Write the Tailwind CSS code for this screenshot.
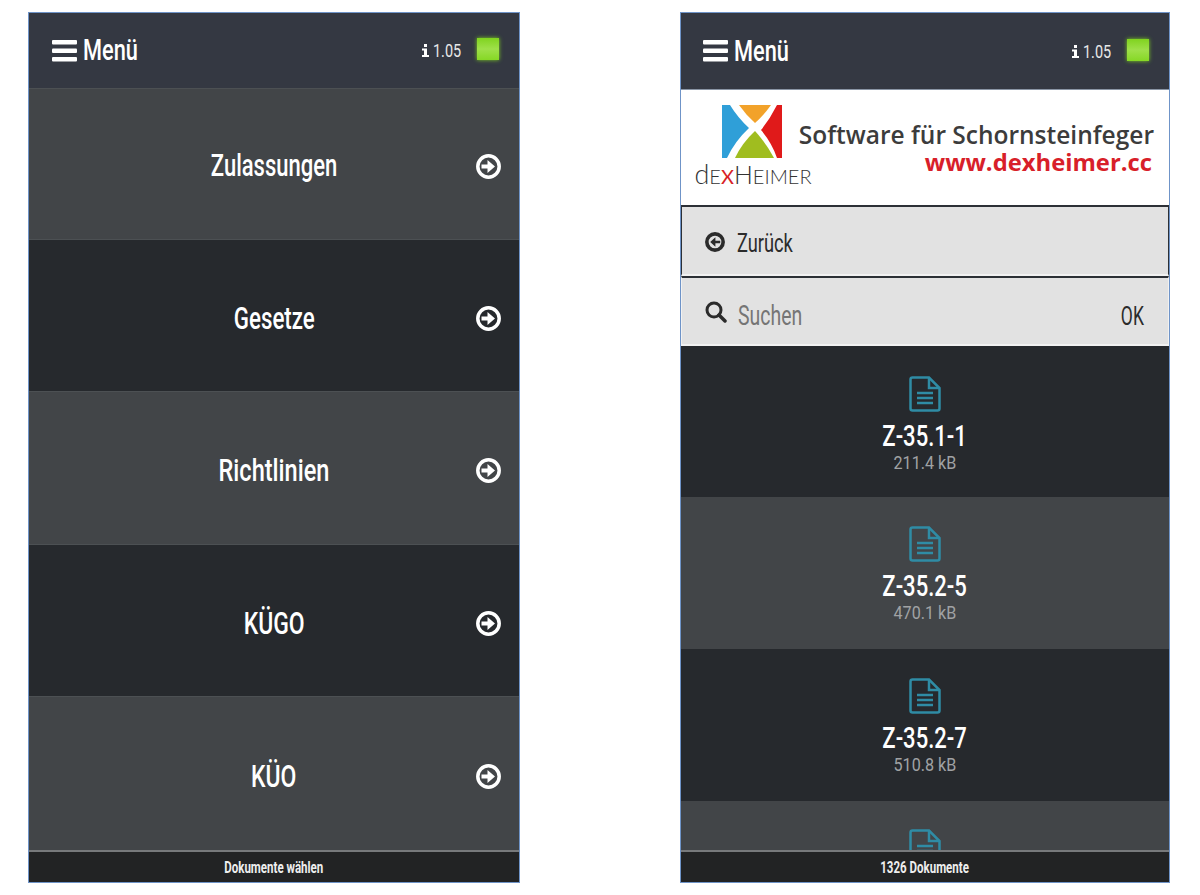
<!DOCTYPE html>
<html lang="de">
<head>
    <meta charset="UTF-8">
    <title>Dokumente</title>
    <script src="https://cdn.jsdelivr.net/npm/@tailwindcss/browser@4"></script>
</head>
<body class="bg-white h-[895px] overflow-hidden font-['Roboto',sans-serif] font-medium">
    <div class="flex pl-[28px] pt-[12px] gap-[160px]">

        <!-- Menu panel -->
        <div class="w-[492px] h-[871px] border border-[#6f94c8] flex flex-col overflow-hidden">
            <div class="h-[75px] shrink-0 bg-[#343842] flex items-center pl-[23px] pr-[20px] text-white">
                <svg class="w-[25px] h-[22px] mr-[6px]" viewBox="0 0 25 22" fill="#fff"><rect y="0" width="25" height="4.5" rx="1"/><rect y="8.5" width="25" height="4.5" rx="1"/><rect y="17" width="25" height="4.5" rx="1"/></svg>
                <span class="w-[55px] origin-left scale-x-[0.75] text-[29px] leading-none whitespace-nowrap">Menü</span>
                <svg class="w-[7px] h-[13px] ml-auto mr-[4px]" viewBox="0 0 7 13" fill="#fff"><rect x="2" y="0" width="3" height="3"/><path d="M0 4.500H5V11H7V13H0V11H2V6.500H0Z"/></svg>
                <span class="w-[28px] origin-left scale-x-[0.76] text-[19px] font-normal leading-none text-[#e8e8e8] mr-[16px] whitespace-nowrap">1.05</span>
                <div class="w-[22px] h-[22px] -mt-[3px] bg-[linear-gradient(#80d31f,#9fe04a_50%,#86d825)] shadow-[0_0_4px_#7fd020]"></div>
            </div>
            <div class="h-[151px] shrink-0 bg-[#424548] grid grid-cols-[1fr_auto_1fr] items-center text-white border-t border-[#4c5053]">
                <span></span><span class="scale-x-[0.71] text-[31px] leading-none mt-[2px]">Zulassungen</span>
                <svg class="w-[25px] h-[25px] justify-self-end mr-[18px] mt-[4px]" viewBox="0 0 25 25"><circle cx="12.500" cy="12.500" r="10.700" fill="none" stroke="#fff" stroke-width="3.500"/><path d="M5.500 10.500H11.500V6L19 12.500L11.500 19V14.500H5.500Z" fill="#fff"/></svg>
            </div>
            <div class="h-[152px] shrink-0 bg-[#26292d] grid grid-cols-[1fr_auto_1fr] items-center text-white border-t border-[#4c5053]">
                <span></span><span class="scale-x-[0.72] text-[31px] leading-none mt-[5px]">Gesetze</span>
                <svg class="w-[25px] h-[25px] justify-self-end mr-[18px] mt-[5px]" viewBox="0 0 25 25"><circle cx="12.500" cy="12.500" r="10.700" fill="none" stroke="#fff" stroke-width="3.500"/><path d="M5.500 10.500H11.500V6L19 12.500L11.500 19V14.500H5.500Z" fill="#fff"/></svg>
            </div>
            <div class="h-[153px] shrink-0 bg-[#424548] grid grid-cols-[1fr_auto_1fr] items-center text-white border-t border-[#4c5053]">
                <span></span><span class="scale-x-[0.76] text-[31px] leading-none mt-[5px]">Richtlinien</span>
                <svg class="w-[25px] h-[25px] justify-self-end mr-[18px] mt-[5px]" viewBox="0 0 25 25"><circle cx="12.500" cy="12.500" r="10.700" fill="none" stroke="#fff" stroke-width="3.500"/><path d="M5.500 10.500H11.500V6L19 12.500L11.500 19V14.500H5.500Z" fill="#fff"/></svg>
            </div>
            <div class="h-[152px] shrink-0 bg-[#26292d] grid grid-cols-[1fr_auto_1fr] items-center text-white border-t border-[#4c5053]">
                <span></span><span class="scale-x-[0.74] text-[31px] leading-none mt-[5px]">KÜGO</span>
                <svg class="w-[25px] h-[25px] justify-self-end mr-[18px] mt-[5px]" viewBox="0 0 25 25"><circle cx="12.500" cy="12.500" r="10.700" fill="none" stroke="#fff" stroke-width="3.500"/><path d="M5.500 10.500H11.500V6L19 12.500L11.500 19V14.500H5.500Z" fill="#fff"/></svg>
            </div>
            <div class="h-[154px] shrink-0 bg-[#424548] grid grid-cols-[1fr_auto_1fr] items-center text-white border-t border-[#4c5053]">
                <span></span><span class="scale-x-[0.74] text-[31px] leading-none mt-[5px]">KÜO</span>
                <svg class="w-[25px] h-[25px] justify-self-end mr-[18px] mt-[5px]" viewBox="0 0 25 25"><circle cx="12.500" cy="12.500" r="10.700" fill="none" stroke="#fff" stroke-width="3.500"/><path d="M5.500 10.500H11.500V6L19 12.500L11.500 19V14.500H5.500Z" fill="#fff"/></svg>
            </div>
            <div class="flex-1 bg-[#222324] border-t-2 border-[#77797b] flex items-center justify-center text-[#eeeeee]"><span class="scale-x-[0.72] text-[16px] font-bold whitespace-nowrap mt-[2px]">Dokumente wählen</span></div>
        </div>

        <!-- Document panel -->
        <div class="w-[490px] h-[871px] border border-[#6f94c8] flex flex-col overflow-hidden">
            <div class="h-[76px] shrink-0 bg-[#343842] flex items-center pl-[22px] pr-[20px] text-white">
                <svg class="w-[25px] h-[22px] mr-[6px]" viewBox="0 0 25 22" fill="#fff"><rect y="0" width="25" height="4.5" rx="1"/><rect y="8.5" width="25" height="4.5" rx="1"/><rect y="17" width="25" height="4.5" rx="1"/></svg>
                <span class="w-[55px] origin-left scale-x-[0.75] text-[29px] leading-none whitespace-nowrap">Menü</span>
                <svg class="w-[7px] h-[13px] ml-auto mr-[4px]" viewBox="0 0 7 13" fill="#fff"><rect x="2" y="0" width="3" height="3"/><path d="M0 4.500H5V11H7V13H0V11H2V6.500H0Z"/></svg>
                <span class="w-[28px] origin-left scale-x-[0.76] text-[19px] font-normal leading-none text-[#e8e8e8] mr-[16px] whitespace-nowrap">1.05</span>
                <div class="w-[22px] h-[22px] -mt-[3px] bg-[linear-gradient(#80d31f,#9fe04a_50%,#86d825)] shadow-[0_0_4px_#7fd020]"></div>
            </div>

            <!-- Banner -->
            <div class="h-[116px] shrink-0 bg-white border-t border-[#8a95a5] flex pl-[13px] pr-[15px]">
                <div class="w-[118px] shrink-0 flex flex-col items-center pt-[15px]">
                    <svg class="w-[60px] h-[53px] -ml-[3px]" viewBox="0 0 60 53">
                        <path d="M0 0L8 0Q16 13 27 23Q13 36 5 53L0 53Z" fill="#2f9fd8"/>
                        <path d="M17 0H49Q42 10 33 18Q24 10 17 0Z" fill="#f2a22a"/>
                        <path d="M55 0H60V53H55Q50 38 39 25Q48 14 55 0Z" fill="#e01a1a"/>
                        <path d="M33 26Q44 38 52 53H13Q20 38 33 26Z" fill="#a0bd1f"/>
                    </svg>
                    <div class="mt-[2px] leading-none text-[#333] font-['Lato',sans-serif] font-light text-[20px] whitespace-nowrap">
                        <span class="text-[27px]">d</span>E<span class="text-[#d81f26] font-normal">X</span><span class="text-[25px]">H</span>EIMER
                    </div>
                </div>
                <div class="flex-1 -ml-[16px] flex flex-col items-end pt-[33px] font-['Open_Sans',sans-serif] font-semibold whitespace-nowrap leading-none">
                    <div class="text-[24.500px] text-[#3c3c3c]">Software für Schornsteinfeger</div>
                    <div class="text-[23.800px] font-bold text-[#d81f2a] mt-[3px] mr-[2px]">www.dexheimer.cc</div>
                </div>
            </div>

            <!-- Back and search -->
            <div class="h-[71px] shrink-0 bg-[#e2e2e2] border-x border-[#2c3036] border-t-2 border-t-[#2c3036] border-b-2 border-b-[#f2f2f2] flex items-center pl-[23px] text-[#2b2b2b]">
                <svg class="w-[20px] h-[20px] mr-[12px] mt-[2px]" viewBox="0 0 25 25"><circle cx="12.500" cy="12.500" r="10.200" fill="none" stroke="#2b2b2b" stroke-width="4.500"/><path d="M19 10.800H13V6.500L6.500 12.500L13 18.500V14.200H19Z" fill="#2b2b2b"/></svg>
                <span class="w-[56px] origin-left scale-x-[0.73] font-normal text-[25px] leading-none mt-[5px] whitespace-nowrap">Zurück</span>
            </div>
            <div class="h-[70px] shrink-0 bg-[#e2e2e2] border-x border-[#f2f2f2] border-t-2 border-t-[#2c3036] border-b-2 border-b-[#f2f2f2] flex items-center pl-[23px] pr-[24px]">
                <svg class="w-[22px] h-[22px] mr-[11px] mt-[2px]" viewBox="0 0 22 22" fill="none" stroke="#2b2b2b"><circle cx="9" cy="9" r="7" stroke-width="3"/><path d="M14 14L20 20" stroke-width="3.500" stroke-linecap="round"/></svg>
                <span class="w-[64px] origin-left scale-x-[0.72] font-normal text-[27px] leading-none text-[#757575] mt-[10px] whitespace-nowrap">Suchen</span>
                <span class="ml-auto origin-right scale-x-[0.7] font-normal text-[25px] leading-none text-[#2b2b2b] mt-[10px]">OK</span>
            </div>

            <!-- Document list -->
            <div class="h-[151px] shrink-0 bg-[#26292d] flex flex-col items-center pt-[30px]">
                <svg class="w-[32px] h-[36px] -ml-[1px]" viewBox="0 0 32 36" fill="none" stroke="#2f8ca5" stroke-width="2.500"><path d="M3.500 1.500H20L30.500 12V32.500Q30.500 34.500 28.500 34.500H3.500Q1.500 34.500 1.500 32.500V3.500Q1.500 1.500 3.500 1.500Z"/><path d="M20 1.500V12H30.500"/><path d="M8 17H24M8 22H24M8 27H24"/></svg>
                <div class="scale-x-[0.76] text-[29px] leading-none text-white mt-[10px]">Z-35.1-1</div>
                <div class="scale-x-[0.85] font-normal text-[19px] leading-none text-[#a0a2a4] mt-[2px]">211.4 kB</div>
            </div>
            <div class="h-[152px] shrink-0 bg-[#424548] flex flex-col items-center pt-[29px]">
                <svg class="w-[32px] h-[36px] -ml-[1px]" viewBox="0 0 32 36" fill="none" stroke="#2f8ca5" stroke-width="2.500"><path d="M3.500 1.500H20L30.500 12V32.500Q30.500 34.500 28.500 34.500H3.500Q1.500 34.500 1.500 32.500V3.500Q1.500 1.500 3.500 1.500Z"/><path d="M20 1.500V12H30.500"/><path d="M8 17H24M8 22H24M8 27H24"/></svg>
                <div class="scale-x-[0.76] text-[29px] leading-none text-white mt-[10px]">Z-35.2-5</div>
                <div class="scale-x-[0.85] font-normal text-[19px] leading-none text-[#a0a2a4] mt-[2px]">470.1 kB</div>
            </div>
            <div class="h-[152px] shrink-0 bg-[#26292d] flex flex-col items-center pt-[29px]">
                <svg class="w-[32px] h-[36px] -ml-[1px]" viewBox="0 0 32 36" fill="none" stroke="#2f8ca5" stroke-width="2.500"><path d="M3.500 1.500H20L30.500 12V32.500Q30.500 34.500 28.500 34.500H3.500Q1.500 34.500 1.500 32.500V3.500Q1.500 1.500 3.500 1.500Z"/><path d="M20 1.500V12H30.500"/><path d="M8 17H24M8 22H24M8 27H24"/></svg>
                <div class="scale-x-[0.76] text-[29px] leading-none text-white mt-[10px]">Z-35.2-7</div>
                <div class="scale-x-[0.85] font-normal text-[19px] leading-none text-[#a0a2a4] mt-[2px]">510.8 kB</div>
            </div>
            <div class="flex-1 min-h-0 bg-[#424548] flex flex-col items-center pt-[28px] overflow-hidden">
                <svg class="w-[32px] h-[36px] -ml-[1px] shrink-0" viewBox="0 0 32 36" fill="none" stroke="#2f8ca5" stroke-width="2.500"><path d="M3.500 1.500H20L30.500 12V32.500Q30.500 34.500 28.500 34.500H3.500Q1.500 34.500 1.500 32.500V3.500Q1.500 1.500 3.500 1.500Z"/><path d="M20 1.500V12H30.500"/><path d="M8 17H24M8 22H24M8 27H24"/></svg>
            </div>
            <div class="h-[32px] shrink-0 bg-[#222324] border-t-2 border-[#77797b] flex items-center justify-center text-[#eeeeee]"><span class="scale-x-[0.72] text-[16px] font-bold whitespace-nowrap mt-[2px]">1326 Dokumente</span></div>
        </div>
    </div>
</body>
</html>
